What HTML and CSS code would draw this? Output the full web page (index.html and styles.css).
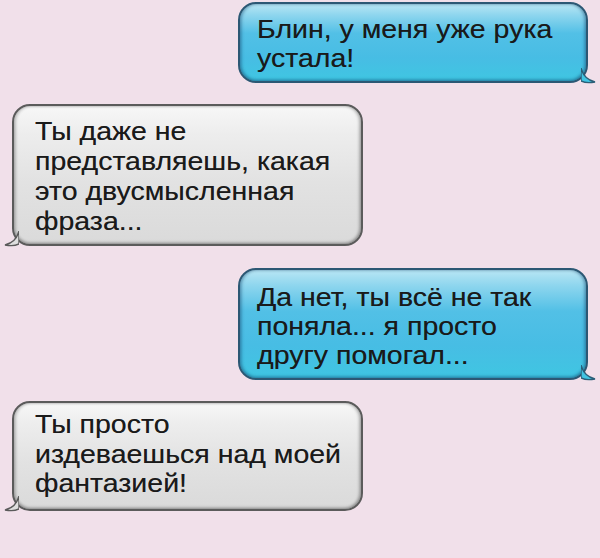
FILE: index.html
```html
<!DOCTYPE html>
<html lang="ru">
<head>
<meta charset="utf-8">
<title>Переписка</title>
<link rel="stylesheet" href="styles.css">
</head>
<body>
<main class="chat">
  <div class="msg msg-out m1">
    <p>Блин, у меня уже рука<br>устала!</p>
    <svg class="tail tail-out" viewBox="0 0 16 16" aria-hidden="true"><path d="M0 0 C2 8 6 12 14 14 C9 15 4 15 0 13 Z" fill="#3fc4e2" stroke="#2b5f78" stroke-width="1.4"/></svg>
  </div>
  <div class="msg msg-in m2">
    <p>Ты даже не<br>представляешь, какая<br>это двусмысленная<br>фраза...</p>
    <svg class="tail tail-in" viewBox="0 0 16 16" aria-hidden="true"><path d="M16 0 C14 8 10 12 2 14 C7 15 12 15 16 13 Z" fill="#dedede" stroke="#5a5a5a" stroke-width="1.4"/></svg>
  </div>
  <div class="msg msg-out m3">
    <p>Да нет, ты всё не так<br>поняла... я просто<br>другу помогал...</p>
    <svg class="tail tail-out" viewBox="0 0 16 16" aria-hidden="true"><path d="M0 0 C2 8 6 12 14 14 C9 15 4 15 0 13 Z" fill="#3fc4e2" stroke="#2b5f78" stroke-width="1.4"/></svg>
  </div>
  <div class="msg msg-in m4">
    <p>Ты просто<br>издеваешься над моей<br>фантазией!</p>
    <svg class="tail tail-in" viewBox="0 0 16 16" aria-hidden="true"><path d="M16 0 C14 8 10 12 2 14 C7 15 12 15 16 13 Z" fill="#dedede" stroke="#5a5a5a" stroke-width="1.4"/></svg>
  </div>
</main>
</body>
</html>
```

FILE: styles.css
```css
html, body {
  margin: 0;
  padding: 0;
  background: #f1e0ea;
}

body {
  width: 600px;
  height: 558px;
  overflow: hidden;
}

.chat {
  display: flex;
  flex-direction: column;
  padding: 2px 0 0 0;
}

.msg {
  position: relative;
  box-sizing: border-box;
  width: 350px;
  border-radius: 18px;
  font-family: "Liberation Sans", Arial, sans-serif;
  font-size: 25px;
  line-height: 29px;
  color: #1a1a1a;
}

/* the message font is set wide */
.msg p {
  margin: 0;
  white-space: nowrap;
  transform: scaleX(1.14);
  transform-origin: left center;
  text-shadow: 0 0 0.6px rgba(0, 0, 0, 0.5);
}

/* outgoing: glossy blue, right side */
.msg-out {
  align-self: flex-end;
  margin-right: 12px;
  border: 2px solid #2c5874;
  background: linear-gradient(to bottom,
    #b9e6f4 0%,
    #8fd6ee 14%,
    #52c0e6 38%,
    #47bde4 70%,
    #3fc6e2 100%);
  box-shadow:
    inset 2px 0 3px rgba(20, 70, 110, 0.35),
    inset -2px 0 3px rgba(20, 70, 110, 0.35),
    inset 0 -2px 3px rgba(20, 70, 110, 0.25);
  padding: 11px 20px 8px 17px;
}

/* incoming: glossy grey, left side */
.msg-in {
  align-self: flex-start;
  margin-left: 12px;
  width: 351px;
  border: 2px solid #5b5b5b;
  background: linear-gradient(to bottom,
    #f7f7f7 0%,
    #ededed 20%,
    #e2e2e2 55%,
    #dadada 100%);
  box-shadow:
    inset 2px 0 3px rgba(0, 0, 0, 0.2),
    inset -2px 0 3px rgba(0, 0, 0, 0.25),
    inset 0 -2px 3px rgba(0, 0, 0, 0.15);
  padding: 10px 24px 8px 21px;
}

.m1 { margin-top: 0; }
.m2 { margin-top: 21px; line-height: 30px; }
.m3 { margin-top: 22px; padding-top: 13px; padding-bottom: 8px; }
.m4 { margin-top: 21px; line-height: 29.5px; padding-top: 7px; padding-bottom: 10px; }

.tail {
  position: absolute;
  width: 16px;
  height: 16px;
  bottom: -3px;
}

.tail-out { right: -11px; }
.tail-in { left: -11px; }
```
